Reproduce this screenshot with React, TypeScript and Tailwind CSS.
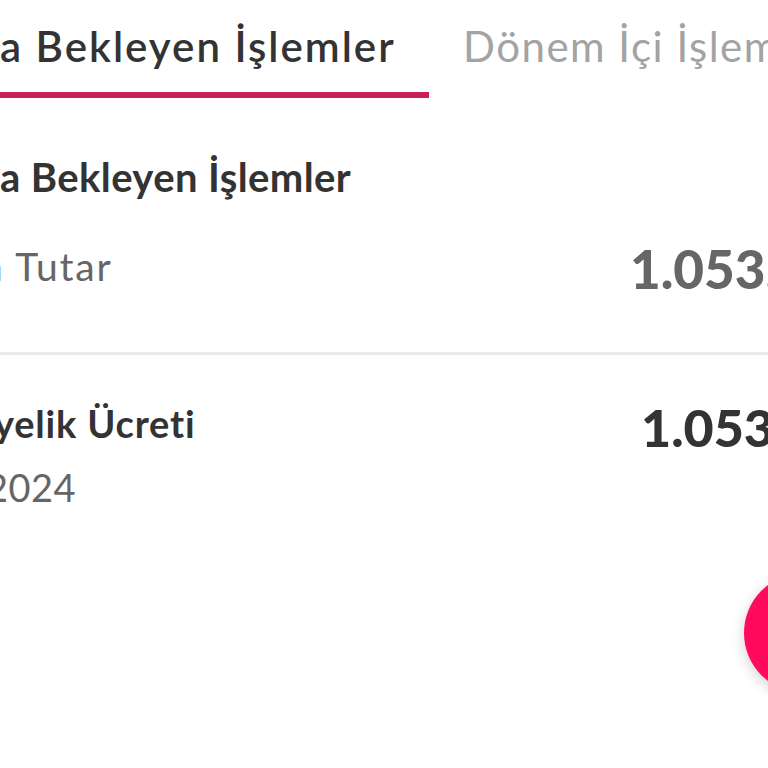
import React from 'react'

function App() {
  return (
    <div className="relative w-[768px] h-[768px] overflow-hidden bg-white font-['Lato',sans-serif]">
      {/* tabs */}
      <div className="flex items-start whitespace-nowrap">
        <div className="w-[429px] shrink-0 border-b-[6px] border-[#c8215a] pt-[21px] pb-[21px]">
          <span className="block text-[42px] leading-[50px] tracking-[2px] font-semibold text-[#333333]">a Bekleyen İşlemler</span>
        </div>
        <div className="ml-[34px] pt-[21px]">
          <span className="block text-[42px] leading-[50px] tracking-[1.5px] font-normal text-[#a3a3a3]">Dönem İçi İşlemler</span>
        </div>
      </div>

      {/* section */}
      <div className="mt-[54px] whitespace-nowrap">
        <h2 className="text-[40px] leading-[50px] tracking-[0.4px] font-bold text-[#333333]">a Bekleyen İşlemler</h2>
        <div className="grid grid-cols-[630px_1fr] mt-[40px] h-[110px]">
          <div className="overflow-hidden pt-[2px]">
            <span className="block -ml-[19px] text-[39px] leading-[44px] tracking-[1.8px] text-[#666666]">n Tutar</span>
          </div>
          <span className="block -mt-[4px] text-[53px] leading-[62px] font-black text-[#666666]">1.053,00 ₺</span>
        </div>
      </div>

      <div className="h-[3px] bg-[#e8ebea]" />

      {/* item */}
      <div className="grid grid-cols-[641px_1fr] pt-[45px] whitespace-nowrap">
        <div className="overflow-hidden">
          <span className="block -ml-[6px] text-[38px] leading-[46px] tracking-[0.8px] font-bold text-[#333333]">yelik Ücreti</span>
          <span className="block mt-[19px] -ml-[14px] text-[38px] leading-[44px] tracking-[0.5px] text-[#666666]">2024</span>
        </div>
        <span className="block -mt-[4px] text-[52px] leading-[62px] font-black text-[#333333]">1.053,00 ₺</span>
      </div>

      {/* floating button */}
      <button className="absolute left-[744px] top-[573px] w-[120px] h-[120px] rounded-full bg-[#ff0a5c] shadow-[0_4px_14px_rgba(0,0,0,0.18)]" />
    </div>
  )
}

export default App
